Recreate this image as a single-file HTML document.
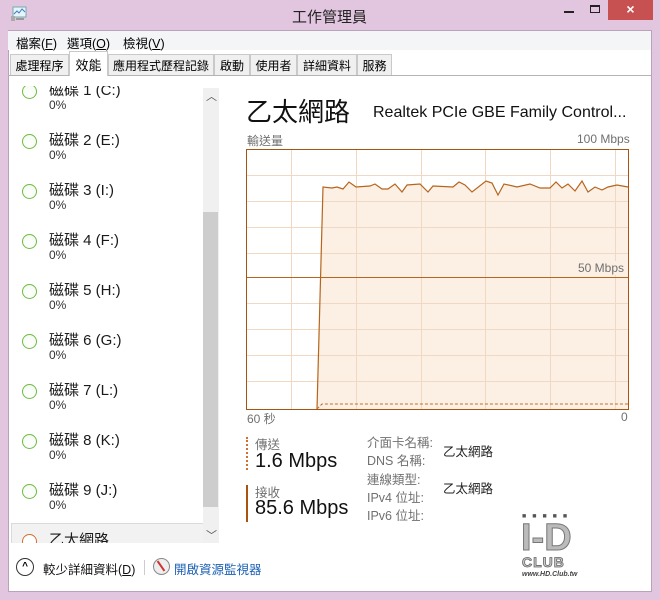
<!DOCTYPE html>
<html><head><meta charset="utf-8"><style>
*{margin:0;padding:0;box-sizing:border-box}
body{width:660px;height:600px;background:#e2c6e0;position:relative;overflow:hidden;font-family:"Liberation Sans","Noto Sans CJK TC",sans-serif;color:#000}
.a{position:absolute;white-space:nowrap}
#win{position:absolute;left:8px;top:30px;width:644px;height:562px;background:#fff;border:1px solid #b9a3b8}
.menu{position:absolute;left:8px;top:31px;width:643px;height:19px;background:#f4f5f7;font-size:12.5px}
.tab{position:absolute;top:54px;height:21px;border:1px solid #c9c9c9;border-bottom:none;background:#f0f0f0;font-size:12px;padding:2px 0 0;text-align:center;white-space:nowrap;overflow:hidden;color:#000}
.item .nm{font-size:15px;color:#1a1a1a}
.item .pc{font-size:12px;color:#333}
.circ{position:absolute;width:15px;height:15px;border-radius:50%;border:1.5px solid #6dbb3f;background:radial-gradient(circle at 50% 70%,#fff,#f2f9ee)}
.gl{font-size:12px;color:#707070}
</style></head><body>
<svg class="a" style="left:10px;top:6px" width="18" height="16"><rect x="3" y="1" width="13" height="10" fill="#e8f4fb" stroke="#7aa" /><polyline points="4,8 7,5 9,7 12,3 15,6" fill="none" stroke="#3a7fc0" stroke-width="1"/><rect x="1" y="10" width="4" height="5" fill="#aaa"/><rect x="6" y="12" width="8" height="2" fill="#999"/></svg>
<div class="a" style="left:292px;top:6px;font-size:15px;color:#222">工作管理員</div>
<div class="a" style="left:564px;top:11px;width:10px;height:2px;background:#222"></div>
<div class="a" style="left:590px;top:5px;width:10px;height:8px;border:1px solid #222;border-top-width:2px"></div>
<div class="a" style="left:608px;top:0;width:45px;height:20px;background:#c75050;color:#fff;font-size:14px;text-align:center;line-height:19px;font-weight:bold">×</div>
<div id="win"></div>
<div class="menu"><span class="a" style="left:8px;top:2px">檔案(<u>F</u>)</span><span class="a" style="left:59px;top:2px">選項(<u>O</u>)</span><span class="a" style="left:115px;top:2px">檢視(<u>V</u>)</span></div>
<div class="a" style="left:8px;top:75px;width:643px;height:1px;background:#b4b4b4"></div>
<div class="tab" style="left:10px;width:59px">處理程序</div>
<div class="tab" style="left:69px;top:51px;height:25px;width:39px;background:#fff;font-size:13px;padding-top:3px">效能</div>
<div class="tab" style="left:108px;width:106px">應用程式歷程記錄</div>
<div class="tab" style="left:214px;width:36px">啟動</div>
<div class="tab" style="left:250px;width:47px">使用者</div>
<div class="tab" style="left:297px;width:60px">詳細資料</div>
<div class="tab" style="left:357px;width:35px">服務</div>
<div class="a" style="left:9px;top:86px;width:194px;height:457px;overflow:hidden">
 <div class="a" style="left:2px;top:437px;width:195px;height:40px;background:#f2f2f2;border:1px solid #dadada"></div>
 <div id="list"></div>
</div>
<div class="a" style="left:203px;top:88px;width:16px;height:455px;background:#f0f0f0"></div>
<div class="a" style="left:203px;top:212px;width:15px;height:295px;background:#cdcdcd"></div>
<div class="a" style="left:206px;top:88px;font-size:11px;color:#555">︿</div>
<div class="a" style="left:206px;top:527px;font-size:11px;color:#555">﹀</div>
<div class="a" style="left:246px;top:92px;font-size:26px;color:#111">乙太網路</div>
<div class="a" style="left:373px;top:104px;font-size:16px;color:#111">Realtek PCIe GBE Family Control...</div>
<div class="a gl" style="left:247px;top:132px">輸送量</div>
<div class="a gl" style="left:577px;top:132px">100 Mbps</div>
<svg class="a" style="left:246px;top:149px" width="383" height="261">
<polygon fill="#fcefe4" points="71,260 77,38 86,39 91,38 97,40 103,33 110,38 124,37 129,35 136,40 142,40 149,35 156,43 161,36 174,35 182,43 187,37 207,38 213,33 219,36 226,43 240,32 246,34 252,46 258,35 271,38 284,35 294,39 304,39 310,33 316,39 322,35 329,42 336,32 342,43 349,38 356,41 362,38 371,36 382,38 382,260"/>
<g stroke="#f1d8c2" stroke-width="1">
<line x1="45.5" y1="0" x2="45.5" y2="261"/><line x1="110.5" y1="0" x2="110.5" y2="261"/><line x1="175.5" y1="0" x2="175.5" y2="261"/><line x1="239.5" y1="0" x2="239.5" y2="261"/><line x1="304.5" y1="0" x2="304.5" y2="261"/><line x1="369.5" y1="0" x2="369.5" y2="261"/>
<line x1="0" y1="26.5" x2="383" y2="26.5"/><line x1="0" y1="52.5" x2="383" y2="52.5"/><line x1="0" y1="78.5" x2="383" y2="78.5"/><line x1="0" y1="104.5" x2="383" y2="104.5"/><line x1="0" y1="154.5" x2="383" y2="154.5"/><line x1="0" y1="180.5" x2="383" y2="180.5"/><line x1="0" y1="206.5" x2="383" y2="206.5"/><line x1="0" y1="232.5" x2="383" y2="232.5"/>
</g>
<polyline fill="none" stroke="#b5651d" stroke-width="1.2" points="71,260 77,38 86,39 91,38 97,40 103,33 110,38 124,37 129,35 136,40 142,40 149,35 156,43 161,36 174,35 182,43 187,37 207,38 213,33 219,36 226,43 240,32 246,34 252,46 258,35 271,38 284,35 294,39 304,39 310,33 316,39 322,35 329,42 336,32 342,43 349,38 356,41 362,38 371,36 382,38"/>
<polyline fill="none" stroke="#c0702a" stroke-width="1" stroke-dasharray="3,2" points="71,260 76,255 382,255"/>
<line x1="0" y1="128.5" x2="383" y2="128.5" stroke="#b5651d"/>
<rect x="0.5" y="0.5" width="382" height="260" fill="none" stroke="#a8530f"/>
</svg>
<div class="a gl" style="left:578px;top:261px;background:#fcefe4">50 Mbps</div>
<div class="a gl" style="left:247px;top:410px">60 秒</div>
<div class="a gl" style="left:621px;top:410px">0</div>
<div class="a" style="left:246px;top:437px;width:2px;height:33px;border-left:2px dotted #d07030"></div>
<div class="a gl" style="left:255px;top:434px;font-size:12.5px">傳送</div>
<div class="a" style="left:255px;top:450px;font-size:20px;color:#111">1.6 Mbps</div>
<div class="a" style="left:246px;top:485px;width:2px;height:37px;background:#a8530f"></div>
<div class="a gl" style="left:255px;top:482px;font-size:12.5px">接收</div>
<div class="a" style="left:255px;top:497px;font-size:20px;color:#111">85.6 Mbps</div>
<div class="a gl" style="left:367px;top:434px;font-size:12.5px;line-height:18.3px">介面卡名稱:<br>DNS 名稱:<br>連線類型:<br>IPv4 位址:<br>IPv6 位址:</div>
<div class="a" style="left:443px;top:434px;font-size:12.5px;line-height:36.6px;color:#222">乙太網路<br>乙太網路</div>
<div class="a" style="left:522px;top:513px;font-size:7px;color:#555;letter-spacing:6px;font-weight:bold">■■■■■</div>
<div class="a" style="left:521px;top:520px;width:66px;height:36px;font-size:38px;font-weight:bold;color:#bbb;line-height:36px;-webkit-text-stroke:1px #777">I-D</div>
<div class="a" style="left:522px;top:555px;font-size:14px;font-weight:bold;color:#ccc;-webkit-text-stroke:0.8px #666;letter-spacing:1px;line-height:14px">CLUB</div>
<div class="a" style="left:522px;top:571px;font-size:7px;font-weight:bold;font-style:italic;color:#444">www.HD.Club.tw</div>
<div class="a" style="left:16px;top:558px;width:18px;height:18px;border:1.3px solid #333;border-radius:50%;font-size:10px;text-align:center;line-height:16px;font-weight:bold">^</div>
<div class="a" style="left:43px;top:559px;font-size:12.5px;color:#111">較少詳細資料(<u>D</u>)</div>
<div class="a" style="left:144px;top:560px;width:1px;height:15px;background:#ccc"></div>
<div class="a" style="left:153px;top:558px;width:17px;height:17px;border:1.5px solid #888;border-radius:50%;background:#eee"><div style="position:absolute;left:6px;top:1px;width:2px;height:12px;background:#c33;transform:rotate(-35deg)"></div></div>
<div class="a" style="left:174px;top:559px;font-size:12.5px;color:#1a5fb4">開啟資源監視器</div>
<script>
var n=["磁碟 1 (C:)","磁碟 2 (E:)","磁碟 3 (I:)","磁碟 4 (F:)","磁碟 5 (H:)","磁碟 6 (G:)","磁碟 7 (L:)","磁碟 8 (K:)","磁碟 9 (J:)"],h="";
for(var i=0;i<9;i++){var t=-7+i*50;h+='<div class="a item" style="left:0;top:'+t+'px"><div class="circ" style="left:13px;top:5px"></div><div class="a nm" style="left:40px;top:0">'+n[i]+'</div><div class="a pc" style="left:40px;top:19px">0%</div></div>';}
h+='<div class="a item" style="left:0;top:443px"><div class="circ" style="left:13px;top:5px;border-color:#d07030;background:#fff"></div><div class="a nm" style="left:40px;top:0">乙太網路</div></div>';
document.getElementById("list").innerHTML=h;
</script>
</body></html>
